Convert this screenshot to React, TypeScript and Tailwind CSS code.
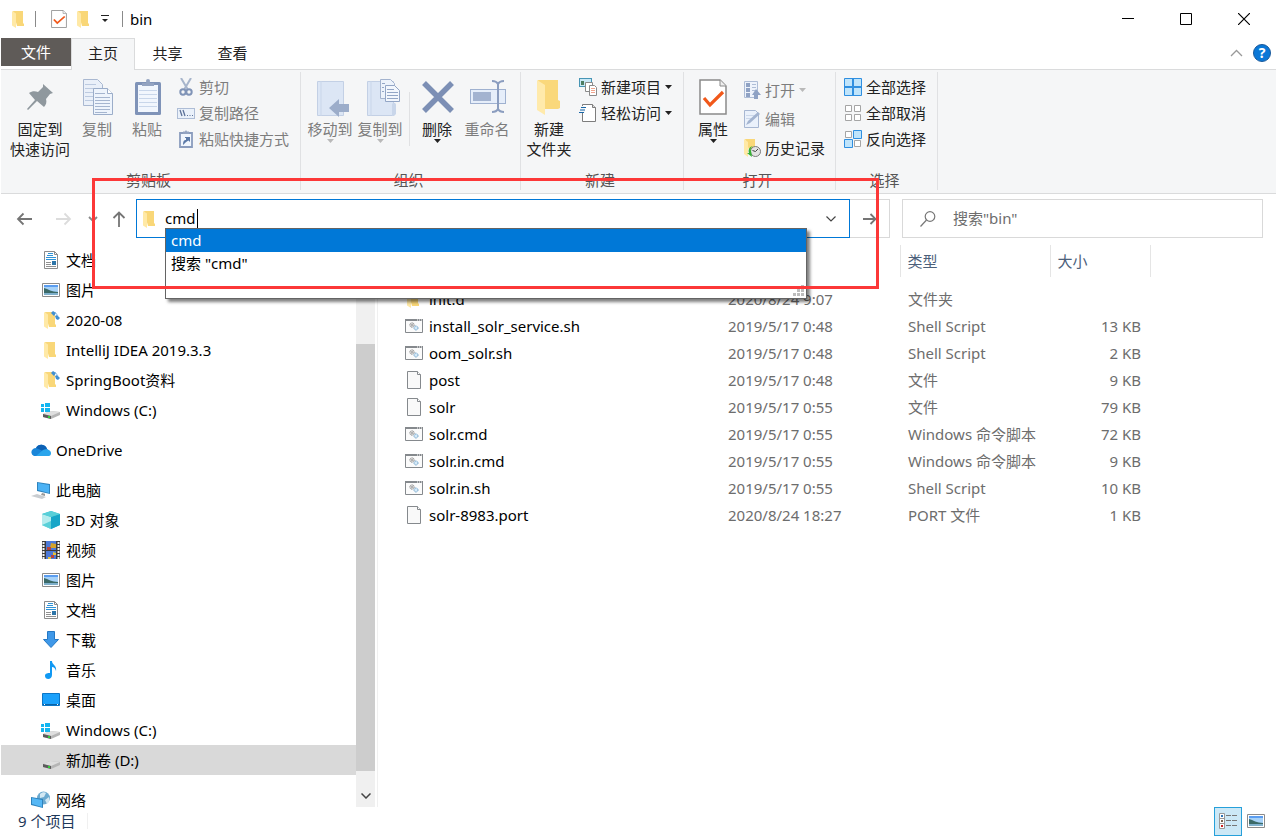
import type { ReactNode } from "react";

type IconProps = { className?: string };

/* ---------- icons ---------- */

function FolderIcon({ className = "w-[18px] h-[18px]" }: IconProps) {
  return (
    <svg viewBox="0 0 18 18" className={className}>
      <path d="M3 1h10v12l1 1v2H7z" fill="#f9d778" />
      <path d="M2 1l4 2.5V18l-4-2.5z" fill="#ffe9a6" />
    </svg>
  );
}

function SyncedFolderIcon() {
  return (
    <svg viewBox="0 0 18 18" className="w-[18px] h-[18px]">
      <path d="M3 1h10v12l1 1v2H7z" fill="#f9d778" />
      <path d="M2 1l4 2.5V18l-4-2.5z" fill="#ffe9a6" />
      <path d="M9 2l2-2 3 2-2 3zM13 5l2-1 3 3-2 2-2-1z" fill="#3f8fd2" />
      <path d="M13 1l3 4" stroke="#8dbbe4" />
    </svg>
  );
}

function CheckDocIcon({ className = "w-4 h-[18px]" }: IconProps) {
  return (
    <svg viewBox="0 0 28 36" preserveAspectRatio="none" className={className}>
      <path d="M1 1h20l6 6v28H1z" fill="#fff" stroke="#8a8a8a" strokeWidth="1.5" />
      <path d="M21 1v6h6" fill="#eee" stroke="#8a8a8a" />
      <path d="M5 19l6 7 13-13" fill="none" stroke="#f1581a" strokeWidth="3.2" />
    </svg>
  );
}

function PinIcon() {
  return (
    <svg viewBox="0 0 28 28" className="w-7 h-7">
      <path
        d="M17 1l10 9-3 1-4 5c1 3 0 6-2 8l-7-6-9 9-1-1 8-9-6-7c3-2 6-2 9-1l5-5z"
        fill="#8f989e"
      />
    </svg>
  );
}

function CopyIcon() {
  return (
    <svg viewBox="-3 0 36 38" className="w-9 h-[38px]">
      <path d="M1.5.5h14l5 5v21h-19z" fill="#eaf0f9" stroke="#a9b8d1" />
      <path d="M3 5.5h11M3 9.500h15M3 13.500h8M3 17.500h8M3 21.500h8" stroke="#bccae0" />
      <path d="M11.500 9.500h14l5 5v21h-19z" fill="#eef4fc" stroke="#9badc9" />
      <path d="M25.500 9.500v5h5" fill="#fff" stroke="#9badc9" />
      <path d="M13 14.500h10M13 18.500h15M13 21.500h15M13 24.500h15M13 27.500h15M13 30.500h15M13 33.500h12" stroke="#a5b5cf" />
    </svg>
  );
}

function PasteIcon() {
  return (
    <svg viewBox="-2 0 28 36" className="w-7 h-9">
      <rect y="3" width="26" height="33" rx="1.5" fill="#7f93b8" />
      <rect x="3" y="6" width="20" height="27" fill="#f1f6fd" />
      <path d="M7 7V4h4a2 2 0 014 0h4v3z" fill="#93a3c1" />
      <circle cx="13" cy="2" r="2" fill="#93a3c1" />
      <path d="M4 11.5h18M4 15.5h18M4 19.5h18M4 23.5h18M4 27.5h18" stroke="#c8d6ea" />
    </svg>
  );
}

function ScissorsIcon() {
  return (
    <svg viewBox="0 0 18 18" className="w-[18px] h-[18px]">
      <path d="M4 0l6.5 11M14 0L7.5 11" stroke="#a7b5cb" strokeWidth="2" />
      <circle cx="6" cy="14" r="2.7" fill="none" stroke="#8094b7" strokeWidth="2" />
      <circle cx="12" cy="14" r="2.7" fill="none" stroke="#8094b7" strokeWidth="2" />
    </svg>
  );
}

function CopyPathIcon() {
  return (
    <svg viewBox="0 0 18 18" className="w-[18px] h-[18px]">
      <rect x=".5" y="4.5" width="17" height="10" fill="#eaf1fa" stroke="#aebdd6" />
      <path d="M3 6l2 6M6 6l2 6" stroke="#5c7299" strokeWidth="1.3" />
      <path d="M10 11.5h1M12.5 11.5h1M15 11.5h1" stroke="#5c7299" />
    </svg>
  );
}

function PasteShortcutIcon() {
  return (
    <svg viewBox="0 0 18 18" className="w-[18px] h-[18px]">
      <path d="M3 3h12v14H3z" fill="#f1f6fd" stroke="#8a9cbd" strokeWidth="1.8" />
      <path d="M6 3V1.5h2L9 0l1 1.5h2V4H6z" fill="#93a3c1" />
      <path d="M6 15c0-4 1-5 3-5V8H8V7h5v5l-1.5-1.5C9 12 8 13 6 15z" fill="#5c7aa8" />
    </svg>
  );
}

function MoveToIcon() {
  return (
    <svg viewBox="-8 0 42 38" className="w-[42px] h-[38px]">
      <path d="M.5 2.5h26v34H.5z" fill="#dce6f5" stroke="#c3d0e5" />
      <path d="M4 2v35" stroke="#c9d6ea" />
      <path d="M12 29l10-9v5h10v8H22v5z" fill="#9cadca" />
    </svg>
  );
}

function CopyToIcon() {
  return (
    <svg viewBox="-8 0 42 38" className="w-[42px] h-[38px]">
      <path d="M.5 2.5h26v34H.5z" fill="#dce6f5" stroke="#c3d0e5" />
      <path d="M4 2v35" stroke="#c9d6ea" />
      <path d="M25 37V26c0-3 4-3 4 0v9l-2 2z" fill="#c9d6ea" />
      <path d="M13.5.5h10l4 4v15h-14z" fill="#edf3fb" stroke="#a3b3ce" />
      <path d="M18.5 6.5h9l5 5v11h-14z" fill="#f3f7fd" stroke="#93a6c6" />
      <path d="M15 4.5h3M15 8.5h2M15 12.5h2M20 10.5h7M20 13.5h11M20 16.5h11M20 19.5h11" stroke="#93a6c6" />
    </svg>
  );
}

function DeleteIcon() {
  return (
    <svg viewBox="-2 0 34 36" className="w-[34px] h-9">
      <path d="M2 4l28 28M30 4L2 32" stroke="#7c8fb5" strokeWidth="5.5" />
    </svg>
  );
}

function RenameIcon() {
  return (
    <svg viewBox="-2 0 38 36" className="w-[38px] h-9">
      <rect x=".5" y="10.5" width="35" height="14" fill="#e6eefa" stroke="#9fb1d0" />
      <rect x="3" y="13" width="18" height="9" fill="#a3b3d0" />
      <path
        d="M22 2c3 0 5 1 6 3v25c-1 2-3 3-6 3M34 2c-3 0-5 1-6 3M34 33c-3 0-5-1-6-3"
        fill="none"
        stroke="#8b9dbf"
        strokeWidth="2"
      />
    </svg>
  );
}

function BigFolderIcon() {
  return (
    <svg viewBox="0 0 24 36" className="w-6 h-9">
      <path d="M1 1h20v20l2 1v7l-2 1H8z" fill="#fad87b" />
      <path d="M0 1l8 5v30l-8-5z" fill="#ffeaab" />
    </svg>
  );
}

function NewItemIcon() {
  return (
    <svg viewBox="0 0 18 18" className="w-[18px] h-[18px]">
      <rect x=".5" y=".5" width="12" height="8" fill="#c9e8f6" stroke="#4795b5" />
      <rect x="2" y="3" width="3" height="4" fill="#4c7d62" />
      <path d="M6.5 4.5h7v9h-7z" fill="#fff" stroke="#8a8a8a" />
      <path d="M10.5 7.5h5l2 2v8h-7z" fill="#fff" stroke="#8a8a8a" />
      <path d="M12 10.5h4M12 12.5h4M12 14.5h4" stroke="#f0a58e" />
    </svg>
  );
}

function EasyAccessIcon() {
  return (
    <svg viewBox="0 0 18 18" className="w-[18px] h-[18px]">
      <path d="M3.5.5h10l3 3v14h-13z" fill="#fff" stroke="#7d7d7d" />
      <path d="M13.5.5v3h3" fill="#ddd" stroke="#7d7d7d" />
      <path d="M2 2h4v7H0z" fill="#f5f6f7" />
      <path d="M2 3.5h5M1 6h5M0 8.5h5" stroke="#1967a8" strokeWidth="1.2" />
    </svg>
  );
}

function OpenIcon() {
  return (
    <svg viewBox="0 0 18 20" className="w-[18px] h-5">
      <path d="M1.5 1.5h13v16h-13z" fill="#eef3fb" stroke="#aebdd6" />
      <path d="M3 3h4v4H3zM3 8h4v4H3zM3 13h4v4H3z" fill="#8fa2c4" />
      <path d="M9 4.5h4M9 7.5h4M9 10.5h3" stroke="#aebdd6" />
      <path d="M13 9l5 6h-3v4h-4v-4H9z" fill="#8fa2c4" />
    </svg>
  );
}

function EditIcon() {
  return (
    <svg viewBox="0 0 18 18" className="w-[18px] h-[18px]">
      <path d="M1.5.5h11l3 3v14h-14z" fill="#eaf1fb" stroke="#a7b7d2" />
      <path d="M3 5.5h10M3 8.5h7" stroke="#ccd8ea" />
      <path d="M3 15l2-4L15 2l2 2L7 13z" fill="#a3b4d0" />
    </svg>
  );
}

function HistoryIcon() {
  return (
    <svg viewBox="0 0 18 18" className="w-[18px] h-[18px]">
      <path d="M2 0h10v13l-4 3z" fill="#f9d778" />
      <path d="M1 0l4 3v15l-4-3z" fill="#ffe9a6" />
      <circle cx="12.5" cy="12.5" r="5" fill="#e3e3e3" stroke="#7b7b7b" />
      <path d="M12.5 12.5L15 10M12.5 12.5l-3-1" stroke="#444" />
      <path d="M10 7c-4 1-5 4-4 7H4l5 4-1-6c-1-2 0-4 2-5z" fill="#35b135" />
    </svg>
  );
}

function SelectAllIcon() {
  return (
    <svg viewBox="0 0 18 18" className="w-[18px] h-[18px]">
      <path d="M.5.5h17v17H.5z" fill="#bfe4fb" stroke="#2f8fe0" />
      <path d="M9 1v16M1 9h16" stroke="#2f8fe0" strokeWidth="2" />
    </svg>
  );
}

function SelectNoneIcon() {
  return (
    <svg viewBox="0 0 18 18" className="w-[18px] h-[18px]">
      <path
        d="M1.5 1.5h6v6h-6zM10.5 1.5h6v6h-6zM1.5 10.5h6v6h-6zM10.5 10.5h6v6h-6z"
        fill="#fff"
        stroke="#a5a5a5"
      />
    </svg>
  );
}

function InvertSelectionIcon() {
  return (
    <svg viewBox="0 0 18 18" className="w-[18px] h-[18px]">
      <path d="M1.5 1.5h6v6h-6zM10.5 10.5h6v6h-6z" fill="#fff" stroke="#a5a5a5" />
      <path d="M9.5.5h8v8h-8zM.5 9.5h8v8h-8z" fill="#bfe4fb" stroke="#2f8fe0" />
    </svg>
  );
}

function DocumentsIcon() {
  return (
    <svg viewBox="0 0 18 18" className="w-[18px] h-[18px]">
      <path d="M2.5.5h10l3 3v14h-13z" fill="#fff" stroke="#8b8b8b" />
      <path d="M12.5.5v3h3" fill="none" stroke="#8b8b8b" />
      <path d="M6 2.5h5M5 4.5h6M4 6.5h10M4 8.5h10" stroke="#2e93d8" />
      <path d="M4 11.5h5M4 13.5h5M4 15.5h10" stroke="#909090" />
      <path d="M10 10h4v4h-4z" fill="#2e75a8" />
    </svg>
  );
}

function PicturesIcon() {
  return (
    <svg viewBox="0 0 18 14" className="w-[18px] h-[14px]">
      <path d="M.5.5h17v13H.5z" fill="#fff" stroke="#8b8b8b" />
      <path d="M2 2h14v10H2z" fill="#a7d2f8" />
      <path d="M2 2h14v2H2z" fill="#5b9df0" />
      <path d="M2 5c4 1 8 4 14 4v3H2z" fill="#3b6a68" />
      <path d="M2 10h14v2H2z" fill="#7fb0cc" />
    </svg>
  );
}

function DriveIcon({ system = false }: { system?: boolean }) {
  return (
    <svg viewBox="0 0 20 18" className="w-5 h-[18px]">
      <path d="M2 13l7-3 10 1v3l-9 4-8-2z" fill="#b5b5b5" />
      <path d="M2 13l7-3 10 1-9 4z" fill="#dedede" />
      <path d="M2 13l8 2v3l-8-2z" fill="#5c5c5c" />
      <path d="M7 15h2v2H7z" fill="#35d13b" />
      {system && (
        <path d="M0 3h3v3H0zM4 2h5v4H4zM0 7h3v4H0zM4 7h5v4H4z" fill="#13b5f0" />
      )}
    </svg>
  );
}

function OneDriveIcon() {
  return (
    <svg viewBox="0 0 20 14" className="w-5 h-[14px]">
      <path d="M3 13a4 4 0 01-1-7 5 5 0 013-1 6 6 0 0111 1 4 4 0 011 7z" fill="#1a86d9" />
      <path d="M5 5a6 6 0 0111 1l-4 2z" fill="#0d61b5" />
      <path d="M5 13l7-6c3-2 8 0 8 3s-2 3-3 3z" fill="#2aa5ec" />
    </svg>
  );
}

function ComputerIcon() {
  return (
    <svg viewBox="0 0 20 18" className="w-5 h-[18px]">
      <path d="M6 1l13 2v10L6 10z" fill="#2e83bd" />
      <path d="M7 2l11 2v8L7 9z" fill="#4bb2f5" />
      <path d="M11 12l3 .8V15l-4-1z" fill="#999" />
      <path d="M0 15l6-2 9 3-4 2z" fill="#c9cdd1" />
    </svg>
  );
}

function CubeIcon() {
  return (
    <svg viewBox="0 0 18 18" className="w-[18px] h-[18px]">
      <path d="M9 0l9 3v11l-9 4-9-4V3z" fill="#32bfcf" />
      <path d="M0 3l9 3v12l-9-4z" fill="#b5ecee" />
      <path d="M0 14l9-4v8z" fill="#5ad0d8" />
      <path d="M9 6l9-3v11l-9 4z" fill="#17a6c8" />
      <path d="M9 0l9 3-9 3-9-3z" fill="#58cfd8" />
    </svg>
  );
}

function VideosIcon() {
  return (
    <svg viewBox="0 0 18 20" className="w-[18px] h-5">
      <path d="M0 1h18v18H0z" fill="#3b3b3b" />
      <path d="M4 1h10v9H4zM4 11h10v8H4z" fill="#4c79d8" />
      <path d="M9 3l5 1v4H8z" fill="#d3a32b" />
      <path d="M5 7h4v3H5zM9 15h3v3H9z" fill="#b6443d" />
      <path d="M11 12l3 1v2h-3zM6 17h3v2H6z" fill="#e5c43a" />
      <path d="M1.5 2v18M16.5 2v18" stroke="#f5f5f5" strokeWidth="2" strokeDasharray="2 1" />
    </svg>
  );
}

function DownloadsIcon() {
  return (
    <svg viewBox="0 0 18 18" className="w-[18px] h-[18px]">
      <path d="M5.5.5h7v8h4L9 16.5 1.500 8.500h4z" fill="#3f98e8" stroke="#2478c4" />
    </svg>
  );
}

function MusicIcon() {
  return (
    <svg viewBox="0 0 18 18" className="w-[18px] h-[18px]">
      <path d="M8 0h2c0 4 5 4 4 10-1-3-2-4-4-4v8c0 5-7 5-7 1 0-3 3-3 5-3z" fill="#1199f3" />
    </svg>
  );
}

function DesktopIcon() {
  return (
    <svg viewBox="0 0 18 14" className="w-[18px] h-[14px]">
      <path d="M.5.5h17v12H.5z" fill="#1ba1fb" stroke="#0b76c7" />
      <path d="M1 11.5h16" stroke="#0b62a4" />
      <path d="M2 11.5h1M15 11.5h1" stroke="#fff" />
    </svg>
  );
}

function NetworkIcon() {
  return (
    <svg viewBox="0 0 20 18" className="w-5 h-[18px]">
      <circle cx="12.5" cy="7" r="6.5" fill="#6ba9cf" />
      <path d="M9 3c2-2 5-2 6-1l-2 4-4 1zM14 9l4-3c1 3 0 5-2 7z" fill="#d3e8f3" />
      <path d="M0 6l12 2v9L0 14z" fill="#2e83bd" />
      <path d="M1 7l10 2v7L1 13z" fill="#55b7f5" />
    </svg>
  );
}

function ScriptIcon() {
  return (
    <svg viewBox="0 0 18 14" className="w-[18px] h-[14px]">
      <path d="M.5.5h17v13H.5z" fill="#fbfbfb" stroke="#85898d" />
      <path d="M0 1h18" stroke="#85898d" strokeWidth="2" />
      <path d="M12 1h1M14 1h1M16 1h1" stroke="#fff" />
      <circle cx="7" cy="6" r="2.2" fill="#ddd" stroke="#878787" strokeDasharray="1 .5" />
      <circle cx="11" cy="9" r="2" fill="#d5e9f7" stroke="#6a9fc7" strokeDasharray="1 .5" />
      <circle cx="7" cy="6" r=".7" fill="#666" />
    </svg>
  );
}

function FileIcon() {
  return (
    <svg viewBox="0 0 18 18" className="w-[18px] h-[18px]">
      <path d="M2.5.5h10l3 3v14h-13z" fill="#f9f9f9" stroke="#85898d" />
      <path d="M12.5.5v3h3" fill="#fff" stroke="#85898d" />
    </svg>
  );
}

function Caret({ className = "text-[#222]" }: IconProps) {
  return (
    <svg viewBox="0 0 7 4" className={`w-[7px] h-1 ${className}`}>
      <path d="M0 0h7L3.5 4z" fill="currentColor" />
    </svg>
  );
}

/* ---------- ribbon ---------- */

function Group({ title, className, children }: { title: string; className: string; children: ReactNode }) {
  return (
    <section className="flex pt-0.5 pb-[3px]">
      <div className={`flex flex-col border-r border-[#e0e1e3] ${className}`}>
        <div className="flex flex-1 items-start">{children}</div>
        <h2 className="h-5 pr-1 text-center leading-5 text-[#555]">{title}</h2>
      </div>
    </section>
  );
}

type ButtonProps = {
  icon: ReactNode;
  label: ReactNode;
  disabled?: boolean;
  menu?: boolean;
  className?: string;
};

function LargeButton({ icon, label, disabled, menu, className = "w-[50px]" }: ButtonProps) {
  return (
    <button
      disabled={disabled}
      className={`flex flex-col items-center pt-[7px] whitespace-nowrap ${disabled ? "text-[#7d7d7d]" : "text-[#222]"} ${className}`}
    >
      <span className="flex h-10 items-start">{icon}</span>
      <span className="leading-5">{label}</span>
      {menu && <Caret className={disabled ? "text-[#b9b9b9]" : "text-[#222]"} />}
    </button>
  );
}

function SmallButton({ icon, label, disabled, menu, className = "h-[26px]" }: ButtonProps) {
  return (
    <button
      disabled={disabled}
      className={`flex items-center gap-1 whitespace-nowrap ${disabled ? "text-[#7d7d7d]" : "text-[#222]"} ${className}`}
    >
      {icon}
      <span className="leading-5">{label}</span>
      {menu && <Caret className={disabled ? "text-[#b9b9b9]" : "text-[#222]"} />}
    </button>
  );
}

function Ribbon() {
  return (
    <div className="flex h-[124px] shrink-0 border-b border-[#dadbdc] bg-[#f5f6f7]">
      <Group title="剪贴板" className="w-[300px]">
        <LargeButton
          className="ml-[9px] w-[60px]"
          icon={<span className="pt-1"><PinIcon /></span>}
          label={<>固定到<br />快速访问</>}
        />
        <LargeButton className="ml-0.5 w-[50px]" disabled icon={<CopyIcon />} label="复制" />
        <LargeButton disabled icon={<PasteIcon />} label="粘贴" />
        <div className="ml-[5px] flex flex-col pt-0.5">
          <SmallButton disabled icon={<ScissorsIcon />} label="剪切" />
          <SmallButton disabled icon={<CopyPathIcon />} label="复制路径" />
          <SmallButton disabled icon={<PasteShortcutIcon />} label="粘贴快捷方式" />
        </div>
      </Group>

      <Group title="组织" className="w-[220px]">
        <LargeButton className="ml-1 w-[50px]" disabled menu icon={<MoveToIcon />} label="移动到" />
        <LargeButton disabled menu icon={<CopyToIcon />} label="复制到" />
        <div className="mt-5 mr-0.5 ml-1 h-[54px] w-px bg-[#e0e1e3]" />
        <LargeButton menu icon={<DeleteIcon />} label="删除" />
        <LargeButton disabled icon={<RenameIcon />} label="重命名" />
      </Group>

      <Group title="新建" className="w-[163px]">
        <LargeButton
          className="ml-[3px] w-[50px]"
          icon={<BigFolderIcon />}
          label={<>新建<br />文件夹</>}
        />
        <div className="ml-[5px] flex flex-col pt-0.5">
          <SmallButton menu icon={<NewItemIcon />} label="新建项目" />
          <SmallButton menu icon={<EasyAccessIcon />} label="轻松访问" />
        </div>
      </Group>

      <Group title="打开" className="w-[152px]">
        <LargeButton
          className="ml-1 w-[50px]"
          menu
          icon={<CheckDocIcon className="w-7 h-9" />}
          label="属性"
        />
        <div className="ml-[5px] flex flex-col pt-[3px]">
          <SmallButton className="h-[29px]" disabled menu icon={<OpenIcon />} label="打开" />
          <SmallButton className="h-[29px]" disabled icon={<EditIcon />} label="编辑" />
          <SmallButton className="h-[29px]" icon={<HistoryIcon />} label="历史记录" />
        </div>
      </Group>

      <Group title="选择" className="w-[102px]">
        <div className="ml-2 flex flex-col pt-0.5">
          <SmallButton icon={<SelectAllIcon />} label="全部选择" />
          <SmallButton icon={<SelectNoneIcon />} label="全部取消" />
          <SmallButton icon={<InvertSelectionIcon />} label="反向选择" />
        </div>
      </Group>
    </div>
  );
}

/* ---------- title bar and tabs ---------- */

function TitleBar() {
  return (
    <header className="flex h-[38px] shrink-0 items-center">
      <div className="flex flex-1 items-center pl-[9px]">
        <FolderIcon />
        <span className="ml-[7px] h-4 w-px bg-[#8a8a8a]" />
        <button aria-label="属性" className="ml-[15px]"><CheckDocIcon /></button>
        <button aria-label="新建文件夹" className="ml-2"><FolderIcon /></button>
        <button aria-label="自定义快速访问工具栏" className="ml-2">
          <svg viewBox="0 0 8 8" className="h-2 w-2">
            <path d="M0 .5h8" stroke="#222" />
            <path d="M1 4h6L4 7z" fill="#222" />
          </svg>
        </button>
        <span className="ml-[13px] h-4 w-px bg-[#8a8a8a]" />
        <h1 className="ml-[7px] leading-5 text-black">bin</h1>
      </div>
      <div className="flex h-full pr-[3px]">
        <button aria-label="最小化" className="flex w-[58px] items-center justify-center">
          <svg viewBox="0 0 12 12" className="h-3 w-3"><path d="M0 5.5h12" stroke="#000" /></svg>
        </button>
        <button aria-label="最大化" className="flex w-[58px] items-center justify-center">
          <svg viewBox="0 0 12 12" className="h-3 w-3">
            <path d="M.5.5h11v11H.5z" fill="none" stroke="#000" />
          </svg>
        </button>
        <button aria-label="关闭" className="flex w-[58px] items-center justify-center">
          <svg viewBox="0 0 12 12" className="h-3 w-3">
            <path d="M0 0l12 12M12 0L0 12" stroke="#000" strokeWidth="1.2" />
          </svg>
        </button>
      </div>
    </header>
  );
}

function Tabs() {
  return (
    <div className="flex h-8 shrink-0 text-[#222]">
      <div className="flex items-start border-b border-[#dadbdc]">
        <button className="h-7 w-[70px] bg-[#5f5b58] text-white">文件</button>
      </div>
      <button className="w-16 border-x border-t border-[#dadbdc] bg-[#f5f6f7] pb-0.5">主页</button>
      <div className="flex flex-1 items-center border-b border-[#dadbdc] pb-px">
        <button className="h-full w-[65px]">共享</button>
        <button className="h-full w-[65px]">查看</button>
        <button aria-label="最小化功能区" className="mr-[10px] ml-auto">
          <svg viewBox="0 0 13 8" className="h-2 w-[13px]">
            <path d="M1 7l5.5-5.5L12 7" fill="none" stroke="#999" strokeWidth="1.3" />
          </svg>
        </button>
        <button
          aria-label="帮助"
          className="mr-[5px] h-[18px] w-[18px] rounded-full border border-[#1a5a9c] bg-[#0b78d7] text-sm leading-4 font-bold text-white"
        >
          ?
        </button>
      </div>
    </div>
  );
}

/* ---------- address bar ---------- */

function AddressBar() {
  return (
    <div className="relative flex h-[51px] shrink-0 pt-[5px] pr-[13px]">
      <div className="flex h-10 w-[135px] shrink-0 items-center pl-[15px]">
        <button aria-label="后退">
          <svg viewBox="0 0 18 14" className="h-[14px] w-[18px]">
            <path d="M16 7H2M7.5 1.5L2 7l5.5 5.5" fill="none" stroke="#757575" strokeWidth="1.8" />
          </svg>
        </button>
        <button aria-label="前进" className="ml-[21px]">
          <svg viewBox="0 0 18 14" className="h-[14px] w-[18px]">
            <path d="M1 7h14M9.5 1.5L15 7l-5.500 5.500" fill="none" stroke="#dcdcdc" strokeWidth="1.8" />
          </svg>
        </button>
        <button aria-label="最近浏览的位置" className="ml-[15px]">
          <svg viewBox="0 0 10 6" className="h-1.5 w-[10px]">
            <path d="M1 1l4 4 4-4" fill="none" stroke="#888" strokeWidth="1.8" />
          </svg>
        </button>
        <button aria-label="上移" className="ml-[14px]">
          <svg viewBox="0 0 14 16" className="h-4 w-[14px]">
            <path d="M7 16V2M1.5 7L7 1.500 12.500 7" fill="none" stroke="#757575" strokeWidth="1.8" />
          </svg>
        </button>
      </div>

      <div className="relative flex h-[39px] flex-1 items-center border border-[#0078d7] bg-white pl-1">
        <FolderIcon />
        <input
          aria-label="地址"
          defaultValue="cmd"
          className="ml-1.5 h-6 w-8 border-none bg-transparent p-0 pb-0.5 text-black outline-none"
        />
        <span className="h-5 w-px bg-black" />
        <button aria-label="展开" className="mr-[13px] ml-auto">
          <svg viewBox="0 0 10 6" className="h-1.5 w-[10px]">
            <path d="M.5.5L5 5 9.500.5" fill="none" stroke="#444" strokeWidth="1.2" />
          </svg>
        </button>

        <ul
          role="listbox"
          aria-label="建议"
          className="absolute top-7 right-[42px] left-7 z-10 h-[71px] border border-[#646464] bg-white text-black shadow-[3px_3px_3px_rgba(0,0,0,0.5)]"
        >
          <li role="option" aria-selected="true" className="h-[23px] bg-[#0078d7] pl-[5px] leading-[23px] text-white">
            cmd
          </li>
          <li role="option" aria-selected="false" className="h-[23px] pl-[5px] leading-[23px]">
            搜索 "cmd"
          </li>
          <li aria-hidden="true" className="absolute right-0.5 bottom-0.5">
            <svg viewBox="0 0 11 11" className="h-[11px] w-[11px]">
              <path
                d="M8 0h3v3H8zM4 4h3v3H4zM8 4h3v3H8zM0 8h3v3H0zM4 8h3v3H4zM8 8h3v3H8z"
                fill="#bdbdbd"
              />
            </svg>
          </li>
        </ul>
      </div>

      <button
        aria-label="转到"
        className="flex h-[39px] w-10 items-center justify-center border-y border-r border-[#d9d9d9]"
      >
        <svg viewBox="0 0 14 12" className="h-3 w-[14px]">
          <path d="M0 6h12M7.5 1l5 5-5 5" fill="none" stroke="#757575" strokeWidth="1.8" />
        </svg>
      </button>

      <label className="ml-3 flex h-[39px] w-[361px] items-center border border-[#d9d9d9] pl-[17px]">
        <svg viewBox="0 0 16 16" className="h-4 w-4 shrink-0">
          <circle cx="10" cy="5.5" r="4.8" fill="none" stroke="#777" strokeWidth="1.2" />
          <path d="M6.5 9L.5 15.5" stroke="#777" strokeWidth="1.2" />
        </svg>
        <input
          type="text"
          aria-label="搜索"
          placeholder={'搜索"bin"'}
          className="ml-[17px] h-6 min-w-0 flex-1 bg-transparent pb-0.5 outline-none placeholder:text-[#6d6d6d]"
        />
      </label>

      {/* highlight frame around the address input */}
      <div className="pointer-events-none absolute -top-4 right-[397px] left-[91px] z-20 h-[111px] border-[3px] border-[#fc3838]" />
    </div>
  );
}

/* ---------- navigation pane ---------- */

type TreeItem = { name: string; icon: ReactNode; root?: boolean; selected?: boolean };

const tree: TreeItem[][] = [
  [
    { name: "文档", icon: <DocumentsIcon /> },
    { name: "图片", icon: <PicturesIcon /> },
    { name: "2020-08", icon: <SyncedFolderIcon /> },
    { name: "IntelliJ IDEA 2019.3.3", icon: <FolderIcon /> },
    { name: "SpringBoot资料", icon: <SyncedFolderIcon /> },
    { name: "Windows (C:)", icon: <DriveIcon system /> },
  ],
  [{ name: "OneDrive", icon: <OneDriveIcon />, root: true }],
  [
    { name: "此电脑", icon: <ComputerIcon />, root: true },
    { name: "3D 对象", icon: <CubeIcon /> },
    { name: "视频", icon: <VideosIcon /> },
    { name: "图片", icon: <PicturesIcon /> },
    { name: "文档", icon: <DocumentsIcon /> },
    { name: "下载", icon: <DownloadsIcon /> },
    { name: "音乐", icon: <MusicIcon /> },
    { name: "桌面", icon: <DesktopIcon /> },
    { name: "Windows (C:)", icon: <DriveIcon system /> },
    { name: "新加卷 (D:)", icon: <DriveIcon />, selected: true },
  ],
  [{ name: "网络", icon: <NetworkIcon />, root: true }],
];

function NavPane() {
  return (
    <aside className="flex shrink-0">
      <nav className="flex w-[355px] flex-col gap-[10px]">
        {tree.map((items, i) => (
          <ul key={i}>
            {items.map((item) => (
              <li key={item.name}>
                <a
                  href="#"
                  className={`flex h-[30px] items-center gap-1 text-black ${item.root ? "pl-[29px]" : "pl-[39px]"} ${item.selected ? "bg-[#d9d9d9]" : ""}`}
                >
                  <span className="flex w-[22px] justify-center">{item.icon}</span>
                  <span className="leading-5">{item.name}</span>
                </a>
              </li>
            ))}
          </ul>
        ))}
      </nav>
      <div className="flex w-[19px] flex-col bg-[#f0f0f0] pt-[99px]">
        <div className="flex-1 bg-[#cdcdcd]" />
        <div className="flex h-9 items-end justify-center pb-2">
          <svg viewBox="0 0 10 6" className="h-1.5 w-[10px]">
            <path d="M.5.5L5 5 9.500.5" fill="none" stroke="#444" strokeWidth="1.5" />
          </svg>
        </div>
      </div>
    </aside>
  );
}

/* ---------- file list ---------- */

const files = [
  { name: "init.d", date: "2020/8/24 9:07", type: "文件夹", size: "", kind: "folder" },
  { name: "install_solr_service.sh", date: "2019/5/17 0:48", type: "Shell Script", size: "13 KB", kind: "script" },
  { name: "oom_solr.sh", date: "2019/5/17 0:48", type: "Shell Script", size: "2 KB", kind: "script" },
  { name: "post", date: "2019/5/17 0:48", type: "文件", size: "9 KB", kind: "file" },
  { name: "solr", date: "2019/5/17 0:55", type: "文件", size: "79 KB", kind: "file" },
  { name: "solr.cmd", date: "2019/5/17 0:55", type: "Windows 命令脚本", size: "72 KB", kind: "script" },
  { name: "solr.in.cmd", date: "2019/5/17 0:55", type: "Windows 命令脚本", size: "9 KB", kind: "script" },
  { name: "solr.in.sh", date: "2019/5/17 0:55", type: "Shell Script", size: "10 KB", kind: "script" },
  { name: "solr-8983.port", date: "2020/8/24 18:27", type: "PORT 文件", size: "1 KB", kind: "file" },
];

function FileList() {
  return (
    <main className="ml-0.5 min-w-0 flex-1 overflow-hidden border-l border-[#f0f0f0]">
      <table className="w-[772px] table-fixed text-left text-[#6d6d6d]">
        <colgroup>
          <col className="w-[342px]" />
          <col className="w-[180px]" />
          <col className="w-[150px]" />
          <col className="w-[100px]" />
        </colgroup>
        <thead>
          <tr className="h-8 text-[#4c607a]">
            <th aria-label="名称" className="border-r border-[#e5e5e5]" />
            <th aria-label="修改日期" className="border-r border-[#e5e5e5]" />
            <th className="border-r border-[#e5e5e5] pl-[7px] font-normal">类型</th>
            <th className="border-r border-[#e5e5e5] pl-[7px] font-normal">大小</th>
          </tr>
        </thead>
        <tbody className="before:block before:h-2 before:content-['']">
          {files.map((file) => (
            <tr key={file.name} className="h-[27px] leading-5">
              <td className="pl-[27px] text-black">
                <div className="flex items-center gap-1.5">
                  {file.kind === "folder" && <FolderIcon />}
                  {file.kind === "script" && <ScriptIcon />}
                  {file.kind === "file" && <FileIcon />}
                  <span>{file.name}</span>
                </div>
              </td>
              <td className="pl-2">{file.date}</td>
              <td className="pl-2 whitespace-nowrap">{file.type}</td>
              <td className="pr-[9px] text-right">{file.size}</td>
            </tr>
          ))}
        </tbody>
      </table>
    </main>
  );
}

function StatusBar() {
  return (
    <footer className="flex h-[30px] shrink-0 items-center pr-[11px] pb-0.5 pl-[17px] text-[#1e395b]">
      <span className="leading-5">9 个项目</span>
      <span className="ml-3 h-4 w-px bg-[#f0f0f0]" />
      <button
        aria-label="详细信息"
        className="ml-auto flex h-[29px] w-7 items-center justify-center border border-[#26a0da] bg-[#cce8f6]"
      >
        <svg viewBox="0 0 18 16" className="h-4 w-[18px]">
          <path d="M.5.5h5v15h-5zM.5 5.5h5M.5 10.5h5" fill="#fff" stroke="#999" />
          <path d="M2 2h2v2H2z" fill="#2e75b8" />
          <path d="M2 7h2v2H2z" fill="#7b6652" />
          <path d="M2 12h2v2H2z" fill="#c22" />
          <path d="M7 2.5h5M13 2.5h5M7 7.5h5M13 7.5h5M7 12.5h5M13 12.5h5" stroke="#777" />
        </svg>
      </button>
      <button aria-label="大缩略图" className="ml-[5px]"><PicturesIcon /></button>
    </footer>
  );
}

export default function App() {
  return (
    <div className="flex h-screen w-full flex-col overflow-hidden bg-white pl-px font-['Noto_Sans','Noto_Sans_CJK_SC',sans-serif] text-[15px]">
      <TitleBar />
      <Tabs />
      <Ribbon />
      <AddressBar />
      <div className="flex min-h-0 flex-1">
        <NavPane />
        <FileList />
      </div>
      <StatusBar />
    </div>
  );
}
